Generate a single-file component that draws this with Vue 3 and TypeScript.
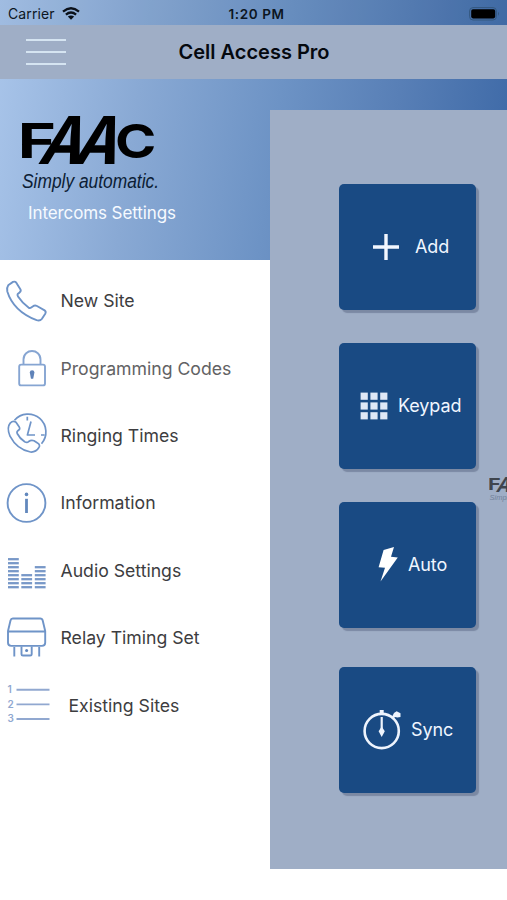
<script setup lang="ts">
interface MenuItem {
  id: string
  label: string
}

interface Tile {
  id: string
  label: string
}

const menu: MenuItem[] = [
  { id: 'phone', label: 'New Site' },
  { id: 'lock', label: 'Programming Codes' },
  { id: 'ringing', label: 'Ringing Times' },
  { id: 'info', label: 'Information' },
  { id: 'audio', label: 'Audio Settings' },
  { id: 'relay', label: 'Relay Timing Set' },
  { id: 'list', label: 'Existing Sites' },
]

const tiles: Tile[] = [
  { id: 'add', label: 'Add' },
  { id: 'keypad', label: 'Keypad' },
  { id: 'auto', label: 'Auto' },
  { id: 'sync', label: 'Sync' },
]

const audioBars = [
  { x: 8, count: 8 },
  { x: 21.3, count: 4 },
  { x: 34.8, count: 6 },
]
const grid = [0, 1, 2]
</script>

<template>
  <div class="screen">
    <div class="status">
      <div class="carrier">
        <span>Carrier</span>
        <svg width="18" height="13" viewBox="0 0 18 13">
          <g fill="none" stroke="#0b1119" stroke-width="2.3">
            <path d="M1 4.6Q9-2 17 4.6" />
            <path d="M3.9 7.7Q9 3.4 14.1 7.7" />
          </g>
          <path d="M5.8 9.6Q9 7.2 12.2 9.6L9 12.8Z" fill="#0b1119" />
        </svg>
      </div>
      <span class="time">1:20 PM</span>
      <svg class="battery" width="32" height="14" viewBox="0 0 32 14">
        <rect x="0.6" y="0.6" width="26.8" height="12.4" rx="3.4" fill="none" stroke="#34587f" stroke-width="1" />
        <rect x="2.2" y="2.2" width="24" height="9.2" rx="1.8" fill="#000" />
        <path d="M29 4.8Q31 6.8 29 8.8Z" fill="#34587f" />
      </svg>
    </div>

    <header class="navbar">
      <div class="burger"><i></i><i></i><i></i></div>
      <h1>Cell Access Pro</h1>
    </header>

    <div class="content">
      <aside class="drawer">
        <div class="brand">
          <svg class="logo" width="142" height="78" viewBox="0 0 142 78">
            <g class="wordmark">
              <text transform="translate(-2.2 44) scale(1.33 .98)" font-size="49">F</text>
              <text transform="translate(17 50) skewX(-18) scale(.89 1)" font-size="66">A</text>
              <text transform="translate(52 50) skewX(-18) scale(.89 1)" font-size="66">A</text>
              <text transform="translate(95 43.6) scale(1.14 .96)" font-size="49">C</text>
            </g>
            <text class="tagline" x="2" y="74" textLength="137" lengthAdjust="spacingAndGlyphs">Simply automatic.</text>
          </svg>
          <p>Intercoms Settings</p>
        </div>

        <nav class="menu">
          <a v-for="item in menu" :key="item.id" class="row" :class="item.id">
            <svg class="glyph" width="52" height="48" viewBox="0 0 52 48" fill="none" stroke="#6f94c8" stroke-width="1.9" stroke-linejoin="round">
              <path
                v-if="item.id === 'phone'"
                d="M8.2 8.3L13 4.9Q15 4.1 16.3 5.7L20.5 12.4Q21.3 14.2 19.6 15.4L17.7 17Q17.1 18 18 19.4Q22.3 25.8 28.5 30.6Q30 31.5 31.2 30.6L33.5 28.9Q35 28 37 29L44.6 33.4Q46.3 34.6 45.4 36.4L41.8 42Q40 44.2 36.6 43.2C23 38 11.5 28 7.3 14.5Q6.6 10.4 8.2 8.3Z"
              />
              <g v-else-if="item.id === 'lock'" stroke="#86a5d2">
                <rect x="19.2" y="20.6" width="25.8" height="20.8" rx="2" />
                <path d="M23.5 20.5V15.6C23.5 4.2 40.5 4.2 40.5 15.6V20.5" />
                <path d="M29.8 28.6a2.3 2.3 0 1 1 4.6 0l-1.2 6.2h-2.2Z" fill="#5f83b9" stroke="none" />
              </g>
              <g v-else-if="item.id === 'ringing'" stroke-width="1.7">
                <path d="M14.5 9.2A17.6 17.6 0 0 1 41.5 32.7" />
                <path d="M27.3 5.8V9.5M41 24h3.6M31 10.5L27.4 24H35" />
                <path d="M10.2 12.1Q13 9.3 16 11.2L19.1 15.7Q20.6 18 18.4 19.3Q16.4 20.7 17.2 22.5Q19.7 27.5 24.7 30.8Q27.2 32.2 28.7 30.5Q31 28.7 34 29.7L37.5 32Q40.8 34 38.7 36.8Q36 41.4 30.5 41Q17 38.7 10 25.2Q6.4 16.5 10.2 12.1Z" />
              </g>
              <g v-else-if="item.id === 'info'">
                <circle cx="26.5" cy="24" r="18.9" />
                <path d="M26.5 19.8V34" stroke="#6288bd" stroke-width="2.8" />
                <circle cx="26.5" cy="15.4" r="1.8" fill="#6288bd" stroke="none" />
              </g>
              <g v-else-if="item.id === 'audio'" stroke="#7898c8" stroke-width="2.3">
                <template v-for="bar in audioBars" :key="bar.x">
                  <path v-for="n in bar.count" :key="n" :d="`M${bar.x} ${45.2 - n * 4}h10.8`" />
                </template>
              </g>
              <g v-else-if="item.id === 'relay'" stroke-width="1.9">
                <path d="M12.8 4.5H40.2Q42.2 4.5 42.7 6.5L45.2 17V28.8Q45.2 31.9 42 31.9H11.2Q8 31.9 8 28.8V17L10.5 6.5Q11 4.5 12.8 4.5ZM8 17.5H45.2" />
                <path d="M21.5 32.5V40.2Q21.5 41.5 23 41.5H30.2Q31.7 41.5 31.7 40.2V32.5M14.3 33V42.4M39.2 33V42.4" />
                <circle cx="26.6" cy="36.6" r="1.5" fill="#6087bd" stroke="none" />
              </g>
              <g v-else stroke="#91a8d0" stroke-width="1.9">
                <path d="M16.5 8.8H49.5M16.5 23.4H49.5M16.5 38H49.5" />
                <g class="digits">
                  <text x="7.5" y="11.5">1</text>
                  <text x="7.5" y="26.5">2</text>
                  <text x="7.5" y="41">3</text>
                </g>
              </g>
            </svg>
            <span>{{ item.label }}</span>
          </a>
        </nav>
      </aside>

      <main class="panel">
        <button v-for="tile in tiles" :key="tile.id" class="tile" :class="tile.id">
          <svg v-if="tile.id === 'add'" width="26" height="26" viewBox="0 0 26 26">
            <path d="M13 0V26M0 13H26" stroke="#f2f7ff" stroke-width="3.4" />
          </svg>
          <svg v-else-if="tile.id === 'keypad'" width="28" height="28" viewBox="0 0 28 28" fill="#dfe8f6">
            <template v-for="r in grid" :key="r">
              <rect v-for="c in grid" :key="c" :x="0.6 + c * 9.8" :y="0.6 + r * 9.8" width="7.2" height="7.2" />
            </template>
          </svg>
          <svg v-else-if="tile.id === 'auto'" width="20" height="36" viewBox="0 0 20 36">
            <path d="M5.6 3L16 0L13 9.8L19.8 10.6L2.5 34.6L7 20.8L0.6 20.2Z" fill="#fff" />
          </svg>
          <svg v-else width="38" height="41" viewBox="0 0 38 41" fill="none" stroke="#eef4fd">
            <circle cx="18.7" cy="22" r="17.1" stroke-width="2.6" />
            <path d="M18.7 1V6" stroke-width="4" />
            <path d="M18.7 8V22" stroke-width="2.2" />
            <path d="M15.6 22.3L18.7 17.5L21.8 22.3L18.7 28Z" fill="#eef4fd" stroke="none" />
            <path d="M31 4L33.6 2.2L37.5 4.3V8L34.4 8.6L32 8L29.5 10.4L28.4 9Z" fill="#eef4fd" stroke="none" />
          </svg>
          <span>{{ tile.label }}</span>
        </button>

        <svg class="watermark" width="18" height="26" viewBox="0 0 18 26">
          <g class="wordmark">
            <text transform="translate(-1 13) scale(1.35 .98)" font-size="16">F</text>
            <text transform="translate(6.5 15) skewX(-18) scale(.89 1)" font-size="21">A</text>
          </g>
          <text class="tagline" x="0.5" y="23">Simply</text>
        </svg>
      </main>
    </div>
  </div>
</template>

<style>
body {
  background: #fff;
}
</style>

<style scoped>
.screen {
  width: 507px;
  height: 900px;
  overflow: hidden;
  font-family: Inter, Roboto, sans-serif;
  background: linear-gradient(98deg, #a9c5ea 0%, #89a9d4 28%, #6d93c5 54%, #587fb6 76%, #3c68a6 100%) 0 0 / 507px 260px no-repeat, #fff;
}
.status {
  display: grid;
  grid-template-columns: 1fr auto 1fr;
  align-items: center;
  height: 25px;
  padding: 2px 6px 0 8px;
  box-sizing: border-box;
  background: rgba(20, 45, 80, 0.06);
  color: #0c1622;
  font-size: 14px;
}
.carrier {
  display: flex;
  align-items: center;
  gap: 7px;
  letter-spacing: 0.1px;
}
.time {
  margin-left: 4px;
  font-size: 13.5px;
  font-weight: 600;
  letter-spacing: 0.6px;
}
.battery {
  justify-self: end;
}
.navbar {
  display: grid;
  grid-template-columns: 1fr auto 1fr;
  align-items: center;
  height: 54px;
  background: #9faec6;
}
.burger {
  display: grid;
  gap: 9.5px;
  width: 40px;
  margin-left: 26px;
}
.burger i {
  height: 2.4px;
  background: #d5e4f1;
}
h1 {
  margin: 0 0 0 1px;
  color: #05090f;
  font-size: 20px;
  font-weight: 600;
}
.content {
  display: flex;
  align-items: flex-start;
}
.drawer {
  width: 270px;
}
.brand {
  height: 181px;
  padding: 35px 0 0 20px;
  box-sizing: border-box;
}
.logo {
  display: block;
  overflow: visible;
}
.wordmark {
  font-family: Inter, sans-serif;
  font-weight: 700;
  fill: #000;
}
.tagline {
  font-family: "Liberation Sans", sans-serif;
  font-style: italic;
  font-size: 20px;
  fill: #0c1d35;
}
.brand p {
  margin: 10px 0 0 8px;
  color: #f6faff;
  font-size: 17px;
  line-height: 22px;
  letter-spacing: -0.1px;
}
.menu {
  height: 640px;
  padding-top: 7px;
  box-sizing: border-box;
  background: #fff;
}
.row {
  display: flex;
  align-items: center;
  height: 67.4px;
  color: #3d3d3f;
  font-size: 17.65px;
}
.row span {
  margin-left: 8.5px;
}
.row.lock {
  color: #626264;
}
.row.list span {
  margin-left: 16.5px;
}
.digits text {
  font-size: 10px;
  font-weight: 600;
  fill: #91a8d0;
  stroke: none;
}
.panel {
  position: relative;
  display: flex;
  flex-direction: column;
  gap: 33px;
  width: 237px;
  height: 759px;
  margin-top: 31px;
  padding: 74px 0 0 69px;
  box-sizing: border-box;
  background: #9faec6;
}
.tile {
  display: flex;
  align-items: center;
  width: 137px;
  height: 126px;
  padding: 0 0 1px;
  border: 0;
  border-radius: 5px;
  background: #194a83;
  box-shadow: 3px 3px 1px #7b89a3;
  color: #f0f6ff;
  font: 18px Inter, sans-serif;
  letter-spacing: -0.1px;
}
.tile.add {
  padding-left: 34px;
  gap: 16px;
}
.tile.keypad {
  padding-left: 21px;
  gap: 10px;
}
.tile.auto {
  padding-left: 39px;
  gap: 10px;
}
.tile.sync {
  margin-top: 6px;
  padding-left: 24px;
  gap: 10px;
}
.watermark {
  position: absolute;
  left: 219px;
  top: 367px;
  overflow: hidden;
  opacity: 0.6;
}
.watermark .tagline {
  font-size: 7.5px;
  fill: #56657e;
}
</style>
